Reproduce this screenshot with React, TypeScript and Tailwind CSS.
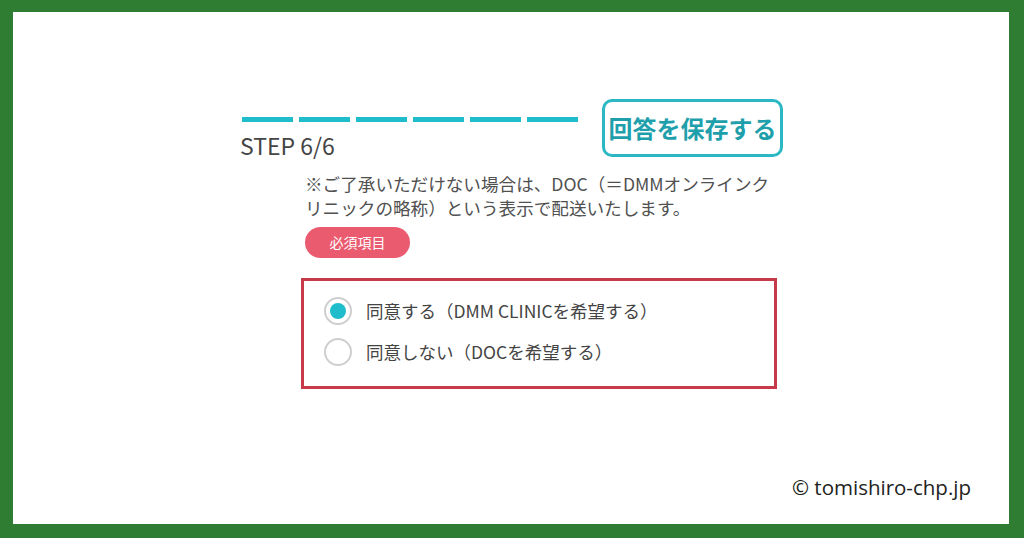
import React from "react";

const jp = "font-['Noto_Sans_CJK_JP',sans-serif]";

const Radio = ({ checked }: { checked: boolean }) => (
  <span className="flex h-[28px] w-[28px] flex-shrink-0 items-center justify-center rounded-full border-2 border-[#cfcfcf] bg-white">
    {checked && <span className="h-[16px] w-[16px] rounded-full bg-[#1fbccb]" />}
  </span>
);

const options = [
  { label: "同意する（DMM CLINICを希望する）", checked: true },
  { label: "同意しない（DOCを希望する）", checked: false },
];

const App = () => {
  return (
    <div className="h-[538px] w-[1024px] bg-[#2e7d32] pb-[14px] pl-[13px] pr-[15px] pt-[12px]">
      <div className={`flex h-full flex-col bg-white ${jp}`}>
        <div className="ml-[227px] mt-[87px] flex">
          <div className="flex w-[362px] flex-col">
            <div className="ml-[2px] mt-[18px] flex gap-[6px]">
              {[0, 1, 2, 3, 4, 5].map((i) => (
                <span key={i} className="h-[5px] w-[51px] bg-[#1fbccb]" />
              ))}
            </div>
            <div className="mt-[8px] text-[23px] leading-[30px] text-[#454545]">
              STEP 6/6
            </div>
          </div>
          <button className="flex h-[58px] w-[181px] items-center justify-center rounded-[10px] border-[3px] border-[#2bb8c4] text-[24px] font-bold leading-none text-[#1e9fab]">
            回答を保存する
          </button>
        </div>

        <p className="ml-[292px] mt-[12px] whitespace-nowrap text-[17.6px] leading-[24px] text-[#505050]">
          ※ご了承いただけない場合は、DOC（＝DMMオンラインク
          <br />
          リニックの略称）という表示で配送いたします。
        </p>
        <div className="ml-[292px] mt-[7px]">
          <span className="flex h-[31px] w-[105px] items-center justify-center rounded-full bg-[#ea5b6f] text-[14px] text-white">
            必須項目
          </span>
        </div>

        <div className="ml-[288px] mt-[20px] h-[111px] w-[476px] border-[3px] border-[#c73a49] pl-[20px] pt-[16px]">
          <div className="flex flex-col gap-[13px]">
            {options.map((o) => (
              <label key={o.label} className="flex items-center gap-[14px]">
                <Radio checked={o.checked} />
                <span className="text-[17.5px] leading-[24px] text-[#444]">
                  {o.label}
                </span>
              </label>
            ))}
          </div>
        </div>

        <div className="mt-auto flex justify-end pb-[25px] pr-[38px]">
          <span className="font-['Open_Sans',sans-serif] text-[20.5px] leading-[24px] text-[#222]">
            © tomishiro-chp.jp
          </span>
        </div>
      </div>
    </div>
  );
};

export default App;
